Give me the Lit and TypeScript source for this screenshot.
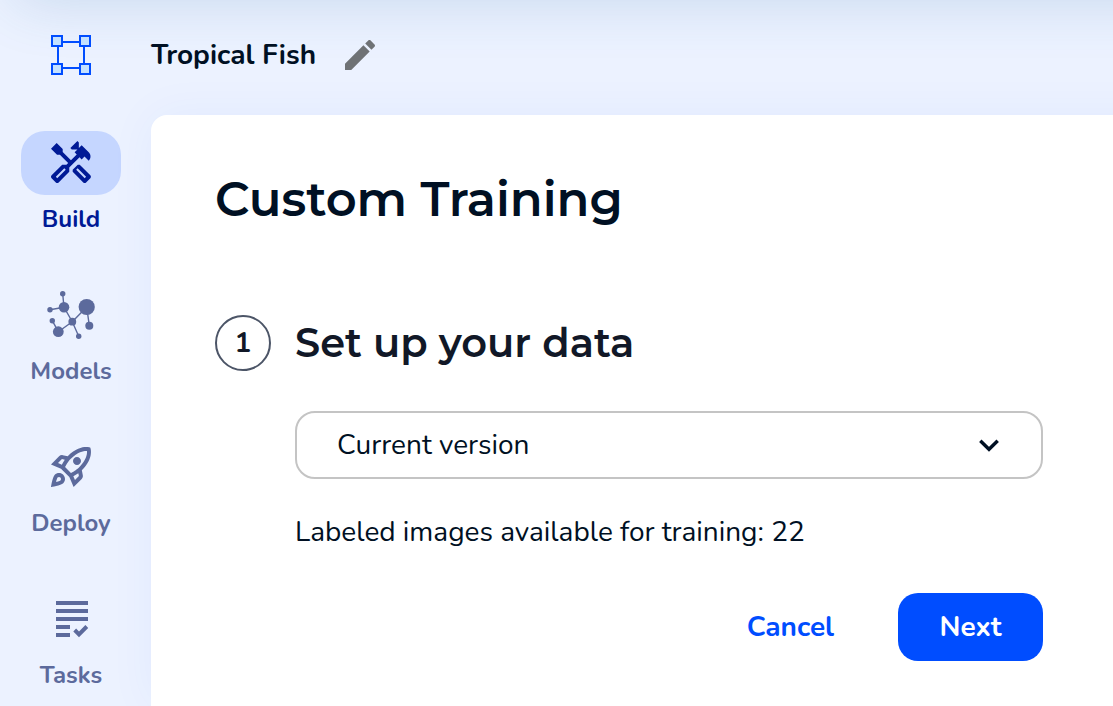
import { LitElement, html, svg, css } from "lit";
import { customElement, state } from "lit/decorators.js";
import { classMap } from "lit/directives/class-map.js";

interface NavEntry {
  id: string;
  label: string;
  icon: unknown;
}

const buildIcon = svg`
  <path d="M21.67 18.17l-5.3-5.3h-.99l-2.54 2.54v.99l5.3 5.3c.39.39 1.02.39 1.41 0l2.12-2.12c.39-.38.39-1.02 0-1.41zm-2.83 1.42l-4.24-4.24.71-.71 4.24 4.24-.71.71z" transform="scale(2)"/>
  <path d="M17.34 10.19l1.41-1.41 2.12 2.12c1.17-1.17 1.17-3.07 0-4.24l-3.54-3.54-1.41 1.41V1.71L15.22 1l-3.54 3.54.71.71h2.83l-1.41 1.41 1.06 1.06-2.89 2.89-4.13-4.13V5.06L4.83 2.04 2 4.87 5.03 7.9h1.41l4.13 4.13-.85.85H7.6l-5.3 5.3c-.39.39-.39 1.02 0 1.41l2.12 2.12c.39.39 1.02.39 1.41 0l5.3-5.3v-2.12l5.15-5.15 1.06 1.05zm-7.98 5.15l-4.24 4.24-.71-.71 4.24-4.24.71.71z" transform="scale(2)"/>`;

const modelsIcon = svg`
  <path d="M15.7 2.7L17 16.3L25.3 30.7L31.7 45.3M3 18.7L17 16.3M25.3 30.7L39.7 16L42.3 34.7M25.3 30.7L11.3 40.7L5.3 29.7" fill="none" stroke="currentColor" stroke-width="1.4"/>
  <circle cx="15.7" cy="2.7" r="2.7"/>
  <circle cx="17" cy="16.3" r="5.3"/>
  <circle cx="3" cy="18.7" r="2.7"/>
  <circle cx="39.7" cy="16" r="8.1"/>
  <circle cx="25.3" cy="30.7" r="3.9"/>
  <circle cx="42.3" cy="34.7" r="4"/>
  <circle cx="5.3" cy="29.7" r="2.7"/>
  <circle cx="11.3" cy="40.7" r="5.4"/>
  <circle cx="31.7" cy="45.3" r="2.7"/>`;

const deployIcon = svg`
  <path transform="scale(2)" d="M6 15c-.83 0-1.58.34-2.12.88C2.7 17.06 2 22 2 22s4.94-.7 6.12-1.88C8.66 19.58 9 18.83 9 18c0-1.66-1.34-3-3-3zm.71 3.71c-.28.28-2.17.76-2.17.76s.47-1.88.76-2.17c.17-.19.42-.3.7-.3.55 0 1 .45 1 1 0 .28-.11.53-.29.71zm10.71-5.06c6.36-6.36 4.24-11.31 4.24-11.31S16.71.22 10.35 6.58l-2.49-.5c-.65-.13-1.33.08-1.81.55L2 10.69l5 2.14L11.17 17l2.14 5 4.05-4.05c.47-.47.68-1.15.55-1.81l-.49-2.49zM7.41 10.83l-1.91-.82 1.97-1.97 1.44.29c-.57.83-1.08 1.7-1.5 2.5zm6.58 7.67l-.82-1.91c.8-.42 1.67-.93 2.49-1.5l.29 1.44-1.96 1.97zM16 12.24c-1.32 1.32-3.38 2.4-4.04 2.73l-2.93-2.93c.32-.65 1.4-2.71 2.73-4.04 4.68-4.68 8.23-3.99 8.23-3.99s.69 3.55-3.99 8.23zM15 11c1.1 0 2-.9 2-2s-.9-2-2-2-2 .9-2 2 .9 2 2 2z"/>`;

const tasksIcon = svg`
  <path d="M9 6h32v4H9zM9 14h32v4H9zM9 22h32v4H9zM9 30h14v4H9zM9 38h14v4H9z"/>
  <path d="M27.7 35L32 39.3L39.8 31.5" fill="none" stroke="currentColor" stroke-width="4"/>`;

const NAV: NavEntry[] = [
  { id: "build", label: "Build", icon: buildIcon },
  { id: "models", label: "Models", icon: modelsIcon },
  { id: "deploy", label: "Deploy", icon: deployIcon },
  { id: "tasks", label: "Tasks", icon: tasksIcon },
];

@customElement("side-nav")
export class SideNav extends LitElement {
  static styles = css`
    :host {
      display: block;
    }
    .list {
      display: flex;
      flex-direction: column;
      gap: 40px;
      margin: 0;
      padding: 0;
      list-style: none;
    }
    .link {
      display: flex;
      flex-direction: column;
      align-items: center;
      gap: 8px;
      color: #5c6a9c;
      font-size: 24px;
      font-weight: 700;
      line-height: 32px;
      text-decoration: none;
    }
    .pill {
      display: grid;
      place-items: center;
      width: 100px;
      height: 64px;
      border-radius: 24px;
    }
    .label {
      padding-bottom: 8px;
    }
    .icon {
      width: 48px;
      height: 48px;
      fill: currentColor;
      overflow: visible;
    }
    .active {
      color: #001a96;
    }
    .active .pill {
      background: #c5d6ff;
    }
  `;

  @state() private current = "build";

  render() {
    return html`
      <nav aria-label="Main">
        <ul class="list">
          ${NAV.map(
            (n) => html`<li>
              <a
                class=${classMap({ link: true, active: n.id === this.current })}
                href="#${n.id}"
                @click=${() => (this.current = n.id)}
              >
                <span class="pill"
                  ><svg class="icon" viewBox="0 0 48 48" aria-hidden="true">${n.icon}</svg></span
                >
                <span class="label">${n.label}</span>
              </a>
            </li>`
          )}
        </ul>
      </nav>
    `;
  }
}

@customElement("training-card")
export class TrainingCard extends LitElement {
  static styles = css`
    :host {
      display: block;
      box-sizing: border-box;
      margin-right: -48px;
      padding: 56px 118px 45px 64px;
      border-radius: 16px 0 0 0;
      background: #fff;
      box-shadow: 0 0 48px rgba(0, 77, 255, 0.05);
    }
    .title,
    .step-title {
      margin: 0;
      font-family: Montserrat, Inter, sans-serif;
      font-weight: 600;
    }
    .title {
      font-size: 48px;
      line-height: 56px;
    }
    .step {
      display: grid;
      grid-template-columns: 56px minmax(0, 1fr);
      column-gap: 24px;
      align-items: center;
      margin-top: 88px;
    }
    .number {
      display: grid;
      place-items: center;
      box-sizing: border-box;
      width: 56px;
      height: 56px;
      border: 2px solid #4c5567;
      border-radius: 50%;
      color: #111827;
      font-size: 28px;
      font-weight: 700;
    }
    .step-title {
      color: #111827;
      font-size: 40px;
      line-height: 56px;
    }
    .form {
      grid-column: 2;
      margin-top: 40px;
    }
    .field {
      display: grid;
      align-items: center;
    }
    .select,
    .chevron {
      grid-area: 1 / 1;
    }
    .select {
      appearance: none;
      box-sizing: border-box;
      width: 100%;
      height: 68px;
      padding: 0 96px 0 40px;
      border: 2px solid #c4c4c4;
      border-radius: 20px;
      background: #fff;
      color: #001023;
      font: inherit;
    }
    .chevron {
      justify-self: end;
      width: 40px;
      height: 40px;
      margin-right: 34px;
      pointer-events: none;
    }
    .info {
      margin: 32px 0 0;
      line-height: 42px;
    }
    .actions {
      display: flex;
      justify-content: flex-end;
      gap: 24px;
      margin-top: 40px;
    }
    .button {
      min-width: 145px;
      height: 68px;
      padding: 0 40px;
      border: 0;
      border-radius: 20px;
      background: none;
      color: #004dff;
      font: inherit;
      font-weight: 700;
    }
    .primary {
      background: #004dff;
      color: #fff;
    }
  `;

  render() {
    return html`
      <h1 class="title">Custom Training</h1>
      <section class="step">
        <span class="number">1</span>
        <h2 class="step-title">Set up your data</h2>
        <div class="form">
          <div class="field">
            <select class="select" aria-label="Dataset version">
              <option>Current version</option>
            </select>
            <svg class="chevron" viewBox="0 0 40 40" fill="none" aria-hidden="true">
              <path d="M11.3 15.8L20 24.3L28.7 15.8" stroke="#001023" stroke-width="3.4" />
            </svg>
          </div>
          <p class="info">Labeled images available for training: 22</p>
          <div class="actions">
            <button class="button" type="button">Cancel</button>
            <button class="button primary" type="button">Next</button>
          </div>
        </div>
      </section>
    `;
  }
}

@customElement("app-root")
export class AppRoot extends LitElement {
  static styles = css`
    :host {
      display: block;
      min-height: 100vh;
      overflow: hidden;
      background: #ecf2ff;
      color: #001023;
      font-family: Nunito, "Noto Sans", sans-serif;
      font-size: 28px;
    }
    .shade {
      height: 80px;
      margin: -80px -80px 0 16px;
      box-shadow: 0 0 60px rgba(46, 112, 165, 0.2);
    }
    .layout {
      display: grid;
      grid-template-columns: 151px minmax(0, 1fr);
      grid-template-rows: 115px auto;
      min-height: 100vh;
    }
    .home {
      display: grid;
      place-items: center;
      width: 40px;
      height: 40px;
      margin: 35px 0 0 51px;
    }
    .logo {
      width: 40px;
      height: 40px;
    }
    .project {
      display: flex;
      align-items: center;
      gap: 24px;
      height: 110px;
    }
    .name {
      font-weight: 700;
    }
    .edit {
      width: 40px;
      height: 40px;
      padding: 0;
      border: 0;
      background: none;
    }
    .pencil {
      display: block;
      width: 40px;
      height: 40px;
      fill: #6f7275;
    }
    .nav {
      width: 100px;
      margin: 16px 0 0 21px;
    }
  `;

  render() {
    return html`
      <div class="shade"></div>
      <div class="layout">
        <a class="home" href="#home" aria-label="Home">
          <svg class="logo" viewBox="0 0 40 40" aria-hidden="true">
            <path d="M7 7h26v26H7z" fill="none" stroke="#004dff" stroke-width="2" />
            <g fill="#c4e1ff" stroke="#004dff" stroke-width="2">
              <path d="M1 1h10v10H1zM29 1h10v10H29zM1 29h10v10H1zM29 29h10v10H29z" />
            </g>
          </svg>
        </a>
        <header class="project">
          <span class="name">Tropical Fish</span>
          <button class="edit" type="button" aria-label="Rename project">
            <svg class="pencil" viewBox="0 0 24 24" aria-hidden="true">
              <path
                d="M3 17.25V21h3.75L17.81 9.94l-3.75-3.75L3 17.25zM20.71 7.04c.39-.39.39-1.02 0-1.41l-2.34-2.34c-.39-.39-1.02-.39-1.41 0l-1.83 1.83 3.75 3.75 1.83-1.83z"
              />
            </svg>
          </button>
        </header>
        <side-nav class="nav"></side-nav>
        <training-card></training-card>
      </div>
    `;
  }
}
